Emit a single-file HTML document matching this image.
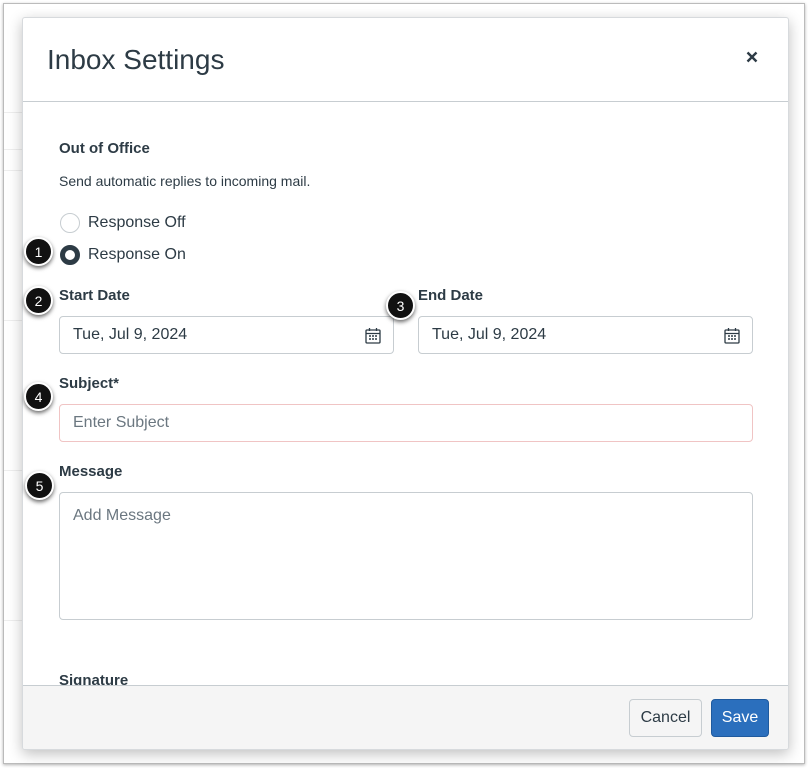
<!DOCTYPE html>
<html><head><meta charset="utf-8"><style>
*{box-sizing:border-box;margin:0;padding:0}
body{width:808px;height:768px;background:#fff;font-family:"Liberation Sans",sans-serif;color:#2d3b45;position:relative;overflow:hidden}
.frame{position:absolute;left:3px;top:3px;width:802px;height:761px;border:1px solid #bbb;background:#fff;box-shadow:0 1px 3px rgba(0,0,0,.3)}
.bgline{position:absolute;left:4px;height:1px;background:#eee;width:20px}
.modal{position:absolute;left:22px;top:17px;width:767px;height:733px;background:#fff;border:1px solid #d7dadd;box-shadow:0 4px 14px rgba(0,0,0,.25);border-radius:3px;overflow:hidden}
.hdr{height:84px;border-bottom:1px solid #c7cdd1;position:relative}
.hdr h1{position:absolute;left:24px;top:26px;font-weight:normal;font-size:28px;color:#2d3b45}
.x{position:absolute;right:30px;top:33px}
.abs{position:absolute}
.lbl{font-weight:bold;font-size:15px}
.inp{position:absolute;border:1px solid #c7cdd1;border-radius:4px;background:#fff;font-size:16px;padding-left:13px;display:flex;align-items:center}
.radio{position:absolute;width:20px;height:20px;border-radius:50%;border:1px solid #c7cdd1;background:#fff}
.footer{position:absolute;left:0;bottom:0;width:100%;height:64px;background:#f5f5f5;border-top:1px solid #c7cdd1}
.btn{position:absolute;top:13px;height:38px;border-radius:4px;font-size:16px;display:flex;align-items:center;justify-content:center}
.badge{position:absolute;width:29px;height:29px;border-radius:50%;background:#111;color:#fff;font-size:14px;display:flex;align-items:center;justify-content:center;border:2px solid #fff;box-shadow:0 2px 4px rgba(0,0,0,.6)}
</style></head><body>
<div class="frame"></div>
<div class="bgline" style="top:112px"></div>
<div class="bgline" style="top:149px"></div>
<div class="bgline" style="top:170px"></div>
<div class="bgline" style="top:320px"></div>
<div class="bgline" style="top:470px"></div>
<div class="bgline" style="top:620px"></div>
<div class="modal">
 <div class="hdr"><h1>Inbox Settings</h1>
  <svg class="x" width="12" height="12" viewBox="0 0 12 12"><path d="M1.5 1.5L10.5 10.5M10.5 1.5L1.5 10.5" stroke="#2d3b45" stroke-width="2.4"/></svg></div>
 <div class="abs lbl" style="left:36px;top:122px">Out of Office</div>
 <div class="abs" style="left:36px;top:155px;font-size:14px">Send automatic replies to incoming mail.</div>
 <div class="radio" style="left:37px;top:195px"></div>
 <div class="abs" style="left:65px;top:196px;font-size:16px">Response Off</div>
 <div class="radio" style="left:37px;top:227px;border:5px solid #2d3b45"></div>
 <div class="abs" style="left:65px;top:228px;font-size:16px">Response On</div>
 <div class="abs lbl" style="left:36px;top:269px">Start Date</div>
 <div class="abs lbl" style="left:395px;top:269px">End Date</div>
 <div class="inp" style="left:36px;top:298px;width:335px;height:38px">Tue, Jul 9, 2024
  <svg style="position:absolute;right:12px;top:10px" width="16" height="17" viewBox="0 0 16 17"><rect x="1" y="3" width="14" height="13" rx="1" fill="none" stroke="#2d3b45" stroke-width="1.3"/><path d="M1 6.5h14M4.5 1v3M11.5 1v3" stroke="#2d3b45" stroke-width="1.3"/><path d="M4 9h2M7 9h2M10 9h2M4 12h2M7 12h2M10 12h2" stroke="#2d3b45" stroke-width="1.6"/></svg></div>
 <div class="inp" style="left:395px;top:298px;width:335px;height:38px">Tue, Jul 9, 2024
  <svg style="position:absolute;right:12px;top:10px" width="16" height="17" viewBox="0 0 16 17"><rect x="1" y="3" width="14" height="13" rx="1" fill="none" stroke="#2d3b45" stroke-width="1.3"/><path d="M1 6.5h14M4.5 1v3M11.5 1v3" stroke="#2d3b45" stroke-width="1.3"/><path d="M4 9h2M7 9h2M10 9h2M4 12h2M7 12h2M10 12h2" stroke="#2d3b45" stroke-width="1.6"/></svg></div>
 <div class="abs lbl" style="left:36px;top:357px">Subject*</div>
 <div class="inp" style="left:36px;top:386px;width:694px;height:38px;border-color:#f0c4c4;color:#6b7780">Enter Subject</div>
 <div class="abs lbl" style="left:36px;top:445px">Message</div>
 <div class="inp" style="left:36px;top:474px;width:694px;height:128px;align-items:flex-start;padding-top:14px;color:#6b7780">Add Message</div>
 <div class="abs lbl" style="left:36px;top:654px">Signature</div>
 <div class="footer">
  <div class="btn" style="left:606px;width:73px;background:#f5f5f5;border:1px solid #c7cdd1;color:#2d3b45">Cancel</div>
  <div class="btn" style="left:688px;width:58px;background:#2b6fbd;border:1px solid #1f5a9e;color:#fff">Save</div>
 </div>
</div>
<div class="badge" style="left:24px;top:237px">1</div>
<div class="badge" style="left:24px;top:286px">2</div>
<div class="badge" style="left:386px;top:291px">3</div>
<div class="badge" style="left:24px;top:382px">4</div>
<div class="badge" style="left:25px;top:471px">5</div>
</body></html>
